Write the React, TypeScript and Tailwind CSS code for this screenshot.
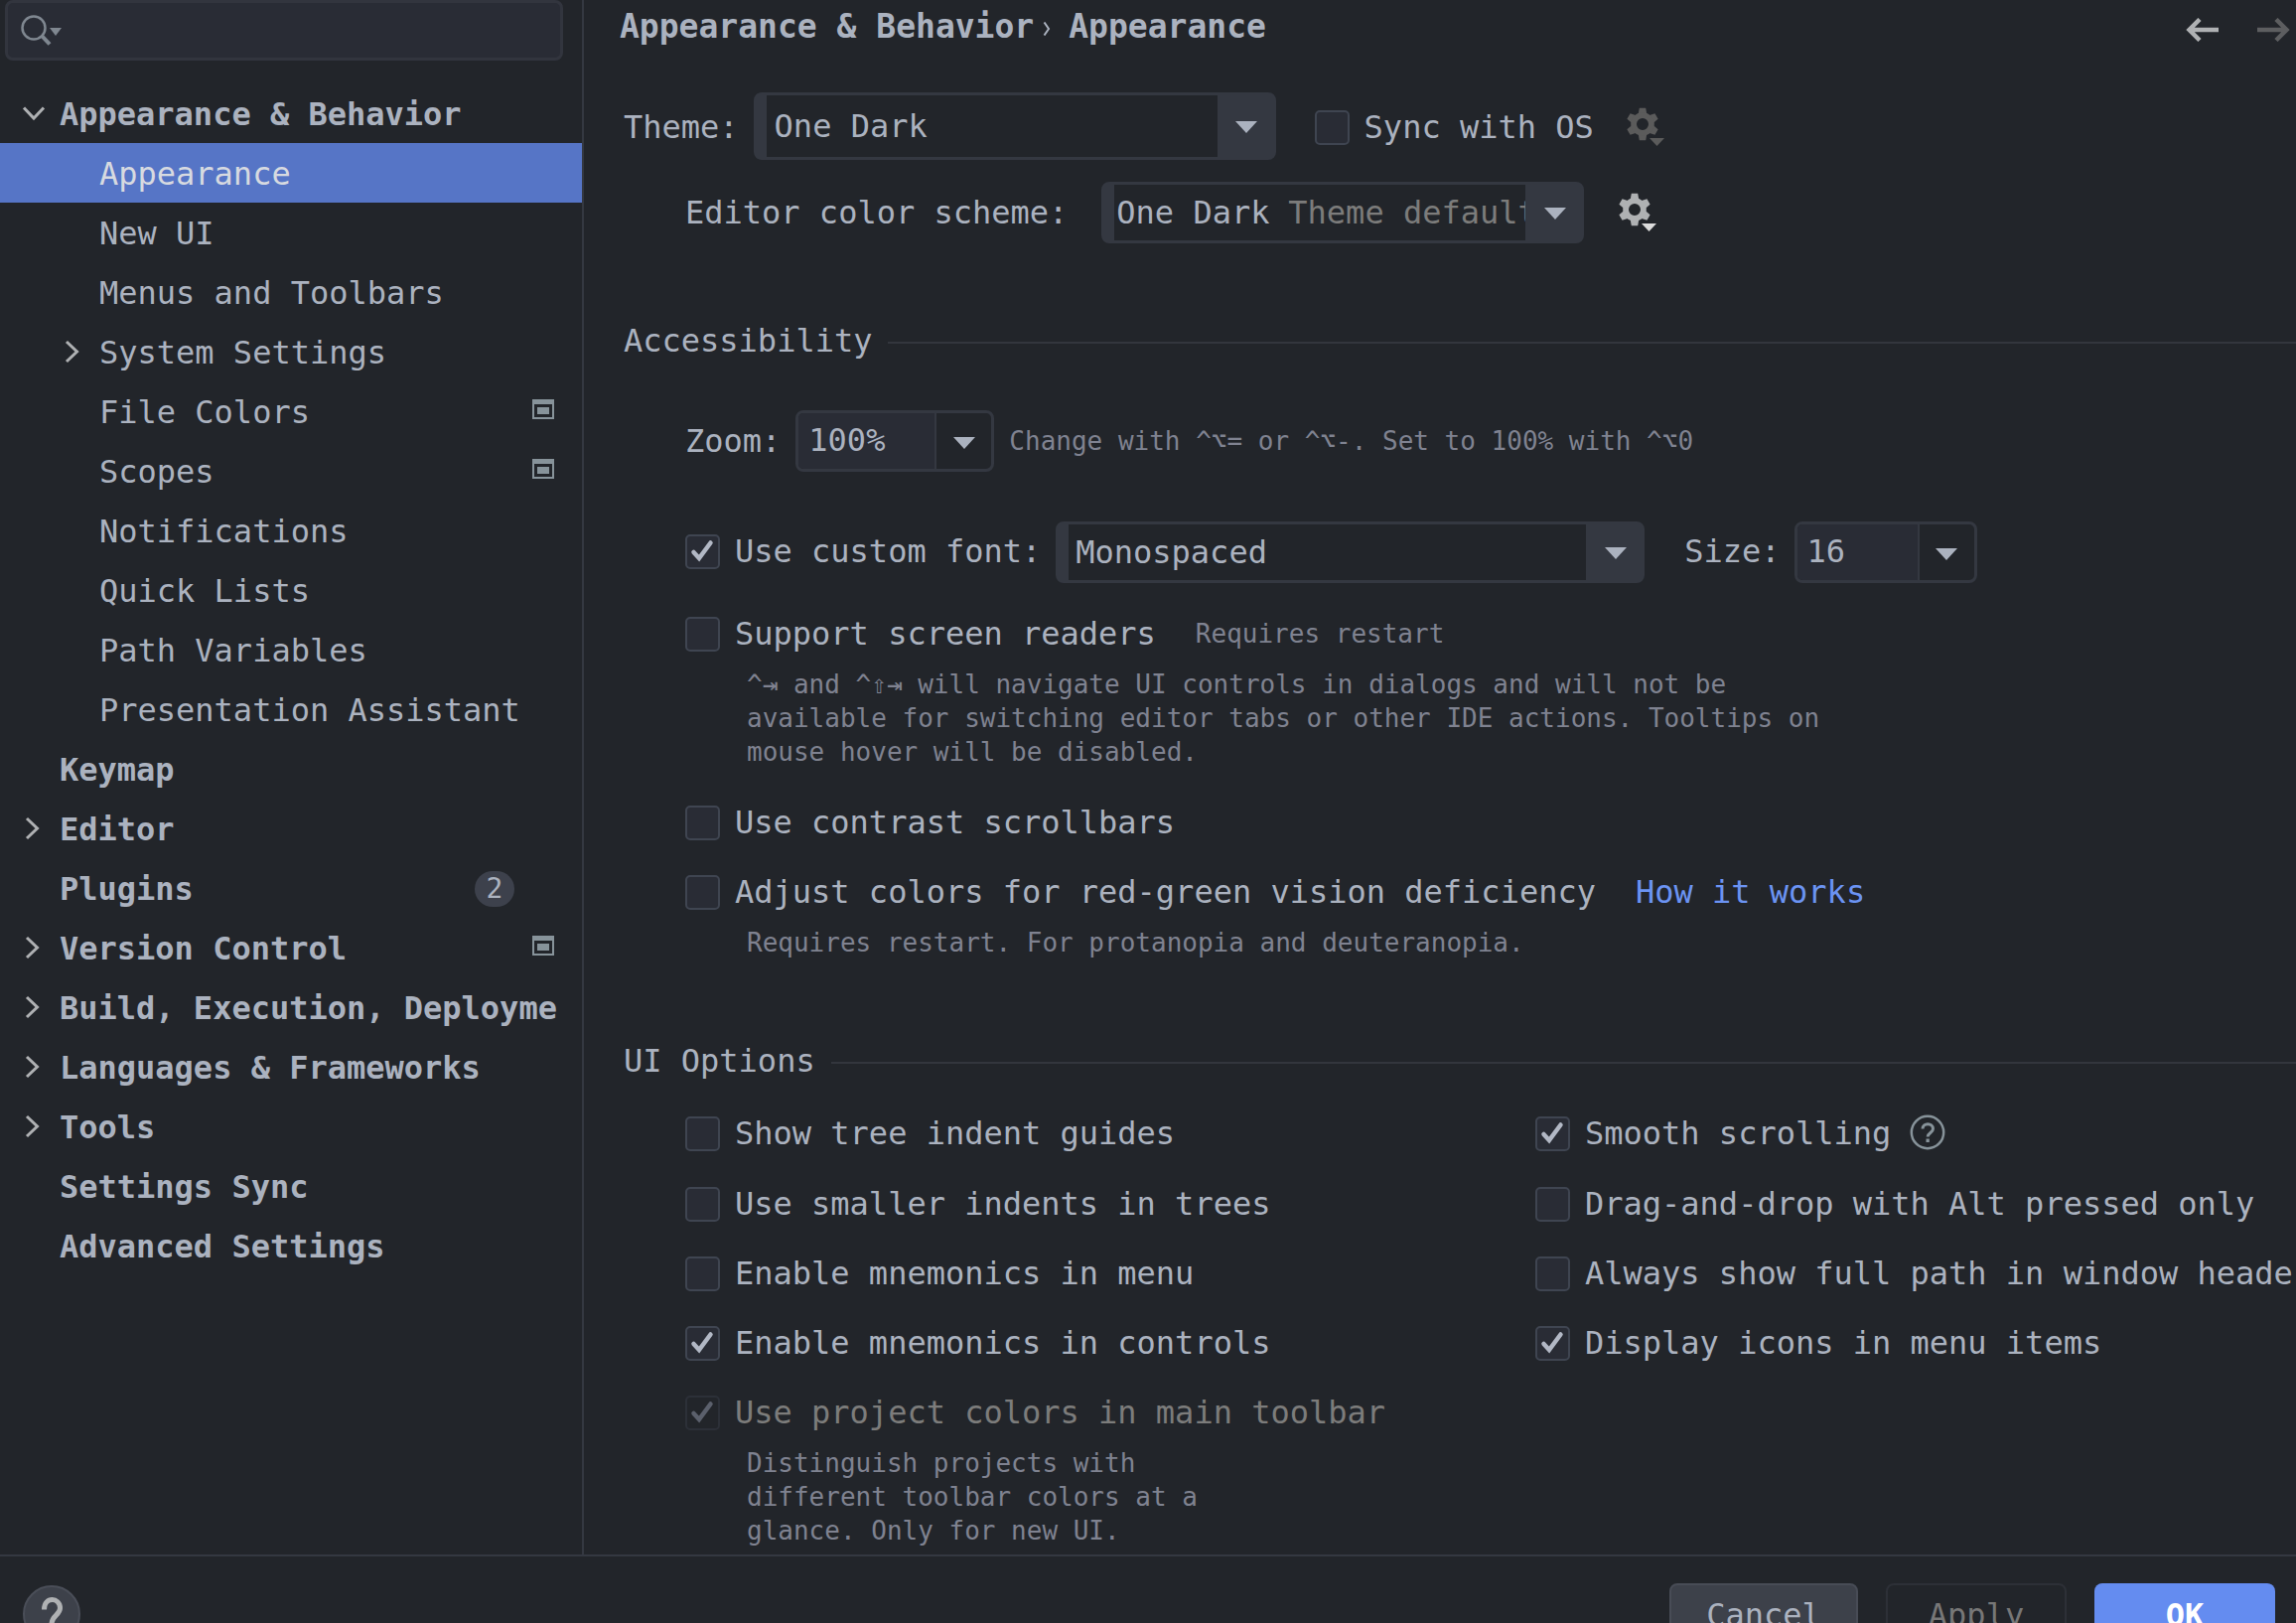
import React, { useState } from 'react';

type Item = {
  label: string;
  level: 0 | 1;
  arrow?: 'open' | 'closed';
  selected?: boolean;
  project?: boolean;
  badge?: number;
};

const ITEMS: Item[] = [
  { label: 'Appearance & Behavior', level: 0, arrow: 'open' },
  { label: 'Appearance', level: 1, selected: true },
  { label: 'New UI', level: 1 },
  { label: 'Menus and Toolbars', level: 1 },
  { label: 'System Settings', level: 1, arrow: 'closed' },
  { label: 'File Colors', level: 1, project: true },
  { label: 'Scopes', level: 1, project: true },
  { label: 'Notifications', level: 1 },
  { label: 'Quick Lists', level: 1 },
  { label: 'Path Variables', level: 1 },
  { label: 'Presentation Assistant', level: 1 },
  { label: 'Keymap', level: 0 },
  { label: 'Editor', level: 0, arrow: 'closed' },
  { label: 'Plugins', level: 0, badge: 2 },
  { label: 'Version Control', level: 0, arrow: 'closed', project: true },
  { label: 'Build, Execution, Deployme', level: 0, arrow: 'closed' },
  { label: 'Languages & Frameworks', level: 0, arrow: 'closed' },
  { label: 'Tools', level: 0, arrow: 'closed' },
  { label: 'Settings Sync', level: 0 },
  { label: 'Advanced Settings', level: 0 },
];

function TreeArrow({ kind }: { kind?: 'open' | 'closed' }) {
  return (
    <svg viewBox="0 0 28 28" className="h-7 w-7 shrink-0" fill="none" stroke="#afb1b3" strokeWidth="3" aria-hidden="true">
      {kind === 'open' && <path d="M4 7.500 14 18 24 7.500" />}
      {kind === 'closed' && <path d="M7 3 17.500 13 7 23" />}
    </svg>
  );
}

function ProjectIcon() {
  return (
    <svg viewBox="0 0 22 20" className="mb-1.5 h-5 w-[22px] shrink-0" aria-hidden="true">
      <path fill="#87939a" fillRule="evenodd" d="M0 0h22v20H0zM2 5v13h18V5z" />
      <path fill="#87939a" d="M5 8h12v7H5z" />
    </svg>
  );
}

function Triangle({ className }: { className: string }) {
  return (
    <svg viewBox="0 0 22 12" className={className} aria-hidden="true">
      <path fill="#abb2bf" d="M0 0h22L11 12z" />
    </svg>
  );
}

function Gear({ color, arrow }: { color: string; arrow: string }) {
  return (
    <svg viewBox="0 0 40 40" className="h-10 w-10" aria-hidden="true">
      <g fill={color}>
        {[0, 60, 120, 180, 240, 300].map((a) => (
          <path key={a} d="M12.800 .8h6.400L20.500 8h-9z" transform={`rotate(${a} 16 17)`} />
        ))}
      </g>
      <circle cx="16" cy="17" r="8.900" fill="none" stroke={color} strokeWidth="5.800" />
      <path d="M23 31h15l-7.500 8z" fill={arrow} />
    </svg>
  );
}

function Check({
  id,
  label,
  checked = false,
  disabled = false,
  children,
}: {
  id: string;
  label: string;
  checked?: boolean;
  disabled?: boolean;
  children?: React.ReactNode;
}) {
  const [on, setOn] = useState(checked);
  return (
    <div className="flex min-h-9 items-center leading-9 whitespace-nowrap">
      <span className="relative block h-[35px] w-[35px] shrink-0">
        <input
          id={id}
          type="checkbox"
          checked={on}
          disabled={disabled}
          onChange={(e) => setOn(e.target.checked)}
          className="block h-[35px] w-[35px] appearance-none rounded-[5px] border-2 border-[#3f4551] bg-[#292c35] disabled:border-[#2c3038] disabled:bg-[#22252a]"
        />
        {on && (
          <svg
            viewBox="0 0 35 35"
            className="pointer-events-none absolute inset-0 h-full w-full"
            fill="none"
            stroke={disabled ? '#5b606c' : '#b2b8c5'}
            strokeWidth="4.500"
            strokeLinecap="round"
            aria-hidden="true"
          >
            <path d="M8.500 18 14 24 25.500 8.500" />
          </svg>
        )}
      </span>
      <label htmlFor={id} className={disabled ? 'ml-[15px] text-[#7c7c7b]' : 'ml-[15px]'}>
        {label}
      </label>
      {children}
    </div>
  );
}

function Select({
  id,
  value,
  width,
  pad,
  muted,
}: {
  id: string;
  value: string;
  width: string;
  pad: string;
  muted?: string;
}) {
  return (
    <div className={`relative flex shrink-0 ${width}`}>
      <select
        id={id}
        className={`w-full appearance-none rounded-lg border-y-3 border-r-59 border-l-13 border-[#343841] bg-[#22252a] text-[#abb2bf] ${pad}`}
      >
        <option>{value}</option>
      </select>
      {muted && (
        <span className="pointer-events-none absolute inset-y-0 right-[59px] left-[188px] flex items-center overflow-hidden whitespace-nowrap text-[#7c7c7b]">
          {muted}
        </span>
      )}
      <span className="pointer-events-none absolute inset-y-0 right-0 flex w-[59px] items-center justify-center pt-0.5">
        <Triangle className="h-3 w-[22px]" />
      </span>
    </div>
  );
}

function Combo({ id, value, width }: { id: string; value: string; width: string }) {
  return (
    <div className={`flex h-[62px] shrink-0 overflow-hidden rounded-lg border-3 border-[#343841] ${width}`}>
      <input
        id={id}
        defaultValue={value}
        className="min-w-0 flex-1 border-r-2 border-[#343841] bg-[#292c35] pb-0.5 pl-2.5 text-[#abb2bf] outline-none"
      />
      <button type="button" aria-label="Show options" className="flex w-[55px] items-center justify-center pt-1">
        <Triangle className="h-3 w-[22px]" />
      </button>
    </div>
  );
}

function SectionTitle({ children }: { children: string }) {
  return (
    <div className="flex h-10 items-center gap-4">
      <h2>{children}</h2>
      <div className="mt-1 h-0.5 flex-1 bg-[#33363d]" />
    </div>
  );
}

function Note({ children, width }: { children: string; width: string }) {
  return <p className={`mt-4 pl-[62px] text-[26px] leading-[34px] text-[#7f8290] ${width}`}>{children}</p>;
}

export default function App() {
  return (
    <div className="flex h-screen flex-col overflow-hidden bg-[#22252a] font-['DejaVu_Sans_Mono','Liberation_Mono',monospace] text-[32px] leading-9 text-[#abb2bf]">
      <div className="flex shrink-0">
        <aside className="w-[588px] shrink-0 border-r-2 border-[#343841]">
          <div className="mr-[19px] ml-[5px] flex h-[61px] items-center rounded-lg border-3 border-[#32353e] bg-[#292c35] pl-3">
            <svg viewBox="0 0 44 32" className="h-8 w-11 shrink-0" fill="none" stroke="#7f8790" aria-hidden="true">
              <circle cx="14" cy="13" r="11.500" strokeWidth="2.500" />
              <path d="m22.500 21.500 7.500 8" strokeWidth="4" />
              <path d="M30 13h12l-6 8z" fill="#7f8790" stroke="none" />
            </svg>
            <input aria-label="Search settings" className="h-full min-w-0 flex-1 bg-transparent pl-2 outline-none" />
          </div>
          <nav className="mt-[23px]">
            {ITEMS.map((it) => (
              <a
                key={it.label}
                href="#"
                className={[
                  'flex h-[60px] items-center pt-0.5 pr-7 whitespace-nowrap',
                  it.level === 0 ? 'pl-5 font-bold' : 'pl-[60px]',
                  it.selected ? 'bg-[#5675c6] text-[#d7dae0]' : '',
                ].join(' ')}
              >
                <TreeArrow kind={it.arrow} />
                <span className="ml-3 flex-1">{it.label}</span>
                {it.badge && (
                  <span className="mr-10 flex h-9 w-10 items-center justify-center rounded-full bg-[#3d414c] text-[28px] font-normal">
                    {it.badge}
                  </span>
                )}
                {it.project && <ProjectIcon />}
              </a>
            ))}
          </nav>
        </aside>

        <main className="min-w-0 flex-1 overflow-hidden pb-[7px]">
          <header className="flex h-[54px] items-center pr-1.5 pl-9 text-[33px]">
            <h1 className="flex items-center font-bold">
              <span>Appearance &amp; Behavior</span>
              <svg viewBox="0 0 8 14" className="mt-1 mr-[18px] ml-[9px] h-3.5 w-2" fill="none" stroke="#abb2bf" strokeWidth="2" aria-hidden="true">
                <path d="M1.500 .5 6 7l-4.500 6.500" />
              </svg>
              <span>Appearance</span>
            </h1>
            <div className="ml-auto flex gap-[37px] pt-1.5">
              <button type="button" aria-label="Back">
                <svg viewBox="0 0 34 24" className="h-6 w-[34px]" fill="none" stroke="#afb1b3" strokeWidth="4.500" aria-hidden="true">
                  <path d="M33 12H4M14 1.500 3.500 12 14 22.500" />
                </svg>
              </button>
              <button type="button" aria-label="Forward">
                <svg viewBox="0 0 34 24" className="h-6 w-[34px]" fill="none" stroke="#5d5e60" strokeWidth="4.500" aria-hidden="true">
                  <path d="M1 12h29M20 1.500 30.500 12 20 22.500" />
                </svg>
              </button>
            </div>
          </header>

          <div className="pt-[39px] pl-10">
            <div className="flex h-[68px] items-stretch">
              <label htmlFor="theme" className="mr-[15px] self-center pt-0.5">
                Theme:
              </label>
              <Select id="theme" value="One Dark" width="w-[526px]" pad="pl-2" />
              <div className="ml-[39px] flex items-center gap-[33px] pt-0.5">
                <Check id="sync" label="Sync with OS" />
                <button type="button" aria-label="Sync options" disabled>
                  <Gear color="#5b5b5b" arrow="#5b5b5b" />
                </button>
              </div>
            </div>

            <div className="mt-[22px] flex h-[62px] items-stretch pl-[62px]">
              <label htmlFor="scheme" className="mr-[34px] self-center">
                Editor color scheme:
              </label>
              <Select id="scheme" value="One Dark" muted="Theme default" width="w-[486px]" pad="pl-0.5" />
              <button type="button" aria-label="Scheme options" className="ml-[35px]">
                <Gear color="#afb1b3" arrow="#dcdcdc" />
              </button>
            </div>

            <div className="mt-[78px]">
              <SectionTitle>Accessibility</SectionTitle>
            </div>

            <div className="mt-[50px] pl-[62px]">
              <div className="flex h-[62px] items-center gap-[15px]">
                <label htmlFor="zoom">Zoom:</label>
                <Combo id="zoom" value="100%" width="w-[200px]" />
                <span className="text-[26px] text-[#7f8290]">Change with ^⌥= or ^⌥-. Set to 100% with ^⌥0</span>
              </div>

              <div className="mt-[50px] flex h-[62px] items-stretch">
                <div className="mr-[15px] flex items-center pb-0.5">
                  <Check id="custom-font" label="Use custom font:" checked />
                </div>
                <Select id="font" value="Monospaced" width="w-[593px]" pad="pl-[7px]" />
                <label htmlFor="size" className="mr-3.5 ml-10 self-center pb-0.5">
                  Size:
                </label>
                <Combo id="size" value="16" width="w-[184px]" />
              </div>

              <div className="mt-[33px]">
                <Check id="readers" label="Support screen readers">
                  <span className="ml-10 text-[26px] text-[#7f8290]">Requires restart</span>
                </Check>
                <Note width="max-w-[1180px]">
                  ^⇥ and ^⇧⇥ will navigate UI controls in dialogs and will not be available for switching editor tabs or other IDE
                  actions. Tooltips on mouse hover will be disabled.
                </Note>
              </div>

              <div className="mt-9">
                <Check id="contrast" label="Use contrast scrollbars" />
              </div>

              <div className="mt-[34px]">
                <Check id="colors" label="Adjust colors for red-green vision deficiency">
                  <a href="#" className="ml-10 text-[#6b93f2]">
                    How it works
                  </a>
                </Check>
                <Note width="max-w-[1180px]">Requires restart. For protanopia and deuteranopia.</Note>
              </div>
            </div>

            <div className="mt-[82px]">
              <SectionTitle>UI Options</SectionTitle>
            </div>

            <div className="mt-[34px] grid grid-cols-[856px_1fr] gap-y-[34px] pl-[62px]">
              <Check id="guides" label="Show tree indent guides" />
              <Check id="smooth" label="Smooth scrolling" checked>
                <svg viewBox="0 0 38 38" className="ml-[18px] h-[38px] w-[38px]" fill="none" stroke="#87939a" aria-hidden="true">
                  <circle cx="19" cy="18" r="16.200" strokeWidth="2.500" />
                  <path d="M14 14.500c0-6.500 10.500-6.500 10.500 0 0 4-5.300 4-5.300 8" strokeWidth="3" />
                  <path d="M17.500 24.500h3.300V28h-3.300z" fill="#87939a" stroke="none" />
                </svg>
              </Check>
              <Check id="smaller" label="Use smaller indents in trees" />
              <Check id="dnd" label="Drag-and-drop with Alt pressed only" />
              <Check id="mn-menu" label="Enable mnemonics in menu" />
              <Check id="full-path" label="Always show full path in window heade" />
              <Check id="mn-controls" label="Enable mnemonics in controls" checked />
              <Check id="icons" label="Display icons in menu items" checked />
              <div>
                <Check id="project-colors" label="Use project colors in main toolbar" checked disabled />
                <Note width="max-w-[562px]">Distinguish projects with different toolbar colors at a glance. Only for new UI.</Note>
              </div>
            </div>
          </div>
        </main>
      </div>

      <footer className="flex shrink-0 items-start gap-7 border-t-2 border-[#343841] px-[21px] pt-[27px]">
        <button type="button" aria-label="Help" className="mr-auto">
          <svg viewBox="0 0 62 62" className="h-[62px] w-[62px]" fill="none" aria-hidden="true">
            <circle cx="31" cy="31" r="28" fill="#3d414a" stroke="#4a4e58" strokeWidth="2" />
            <path d="M23.500 26.500c0-13.500 16-12.500 16 -1.500 0 7-8.500 7.500-8.500 16" stroke="#afb1b3" strokeWidth="5" />
            <path d="M28.500 44h5v5h-5z" fill="#afb1b3" />
          </svg>
        </button>
        <button type="button" className="h-16 w-[190px] rounded-lg border-2 border-[#484c56] bg-[#3d414a]">
          Cancel
        </button>
        <button type="button" disabled className="h-16 w-[182px] rounded-lg border-2 border-[#2d3037] text-[#777777]">
          Apply
        </button>
        <button type="button" className="h-16 w-[182px] rounded-lg bg-[#648cf0] font-bold text-white">
          OK
        </button>
      </footer>
    </div>
  );
}
